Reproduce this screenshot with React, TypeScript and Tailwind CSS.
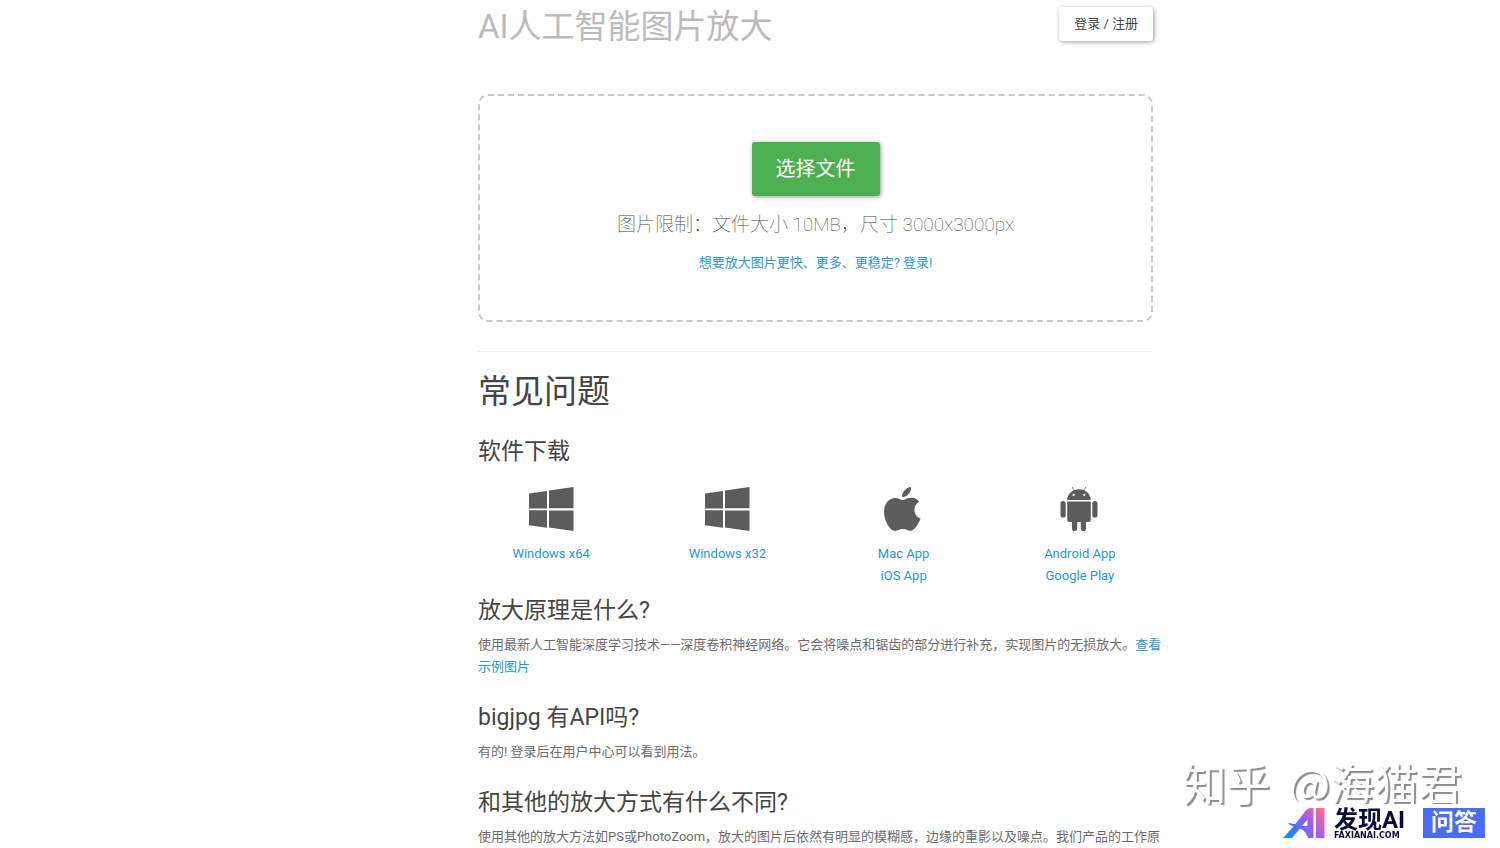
import type { ReactNode } from 'react';

interface DownloadLink {
  label: string;
  href: string;
}

interface PlatformProps {
  icon: ReactNode;
  links: DownloadLink[];
}

function WindowsIcon() {
  return (
    <svg viewBox="0 0 46 44" className="h-11 w-[46px] fill-[#5c5c5c]" aria-hidden="true">
      <path d="M1 6.400 19 4v17.400H1zM21 3.600 45.500 0v21.200H21zM1 23.200h18v17.500L1 38.200zM21 23.400h24.500V44L21 40.400z" />
    </svg>
  );
}

function AppleIcon() {
  return (
    <svg viewBox="0 0 39 44" className="h-11 w-[39px] fill-[#5c5c5c]" aria-hidden="true">
      <path d="M27 0c.6 5-4 10.200-9 10C17.500 5.500 22.200.4 27 0z" />
      <path d="M35.200 14.800c-3 1.900-4.800 4.500-4.800 8 0 4 2.400 7.300 6.100 8.800-1.300 4-5.400 11.700-9.700 12.200-3.100.1-4.500-1.700-8-1.700-3.400 0-4.700 1.700-7.700 1.900C6 44.100 0 33.600 0 25c0-8.400 5-14 11-14.100 3.200 0 6 2.100 7.800 2.100 1.900 0 5.300-2.600 9.200-2.200 2.800.1 5.500 1.400 7.200 4z" />
    </svg>
  );
}

function AndroidIcon() {
  return (
    <svg viewBox="0 0 40 44" className="h-11 w-10 fill-[#5c5c5c]" aria-hidden="true">
      <path
        fillRule="evenodd"
        d="M7.200 13C7.400 8.500 10 5.100 13.700 3.300L11.600 0l.6-.3 2.200 3.300c3-1.100 6.300-1.100 9.200 0L25.800-.3l.6.3-2.100 3.300C28 5.100 30.600 8.500 30.800 13zM13.700 6.800a1.100 1.100 0 1 0 0 2.200 1.100 1.100 0 0 0 0-2.200zm10.600 0a1.100 1.100 0 1 0 0 2.200 1.100 1.100 0 0 0 0-2.200z"
      />
      <path d="M7.200 14.400h23.600v18.200a2.500 2.500 0 0 1-2.500 2.500H9.700a2.500 2.500 0 0 1-2.500-2.500z" />
      <rect x="0.500" y="14" width="5.200" height="16.500" rx="2.600" />
      <rect x="32.300" y="14" width="5.200" height="16.500" rx="2.600" />
      <rect x="12" y="30" width="5.200" height="14" rx="2.600" />
      <rect x="20.800" y="30" width="5.200" height="14" rx="2.600" />
    </svg>
  );
}

function Platform({ icon, links }: PlatformProps) {
  return (
    <div className="flex flex-col items-center">
      {icon}
      <div className="mt-3 flex flex-col items-center">
        {links.map((link) => (
          <a key={link.label} href={link.href} className="text-[#2d95d6] hover:underline">
            {link.label}
          </a>
        ))}
      </div>
    </div>
  );
}

function Question({ title, children }: { title: string; children: ReactNode }) {
  return (
    <section className="mb-[27px]">
      <h2 className="text-[23px] leading-[26px] text-[#444]">{title}</h2>
      <p className="mt-[10px] lg:whitespace-nowrap">{children}</p>
    </section>
  );
}

function SiteBadge() {
  return (
    <div className="flex h-[44px] items-start justify-end bg-white pt-1 pr-[15px]">
      <svg viewBox="0 0 42 30" className="h-[30px] w-[42px]" aria-hidden="true">
        <defs>
          <linearGradient id="mark" gradientUnits="userSpaceOnUse" x1="2" y1="30" x2="40" y2="2">
            <stop offset="0" stopColor="#0a94ff" />
            <stop offset="0.3" stopColor="#3f78fb" />
            <stop offset="0.6" stopColor="#a35bf0" />
            <stop offset="1" stopColor="#ff6c8c" />
          </linearGradient>
        </defs>
        <g fill="url(#mark)">
          <path
            fillRule="evenodd"
            d="M0 30 10.500 18.500C8 17.800 6 16.500 5 14.500c2.500 1.200 5 1.600 7.500 1.400L22.500 3C24 1 25.500 0 28 0h2.500v30H25c-1-4.500-3.500-7.500-8-9.500L9 30zM24.500 11.500 19 18c2.500.2 4 .1 5.500-.3z"
          />
          <path d="M33 0h8.500v30H33z" />
        </g>
      </svg>
      <div className="ml-[9px] flex w-[75px] flex-col text-[#0b0b3b]">
        <span className="text-[24px] leading-[24px] font-bold whitespace-nowrap">发现AI</span>
        <span className="font-['DejaVu_Sans',sans-serif] text-[8px] leading-[8px] font-bold whitespace-nowrap">
          FAXIANAI.COM
        </span>
      </div>
      <span className="ml-[14px] flex h-[30px] w-[62px] items-center justify-center bg-[#4a6cf7] text-[23px] font-bold text-white">
        问答
      </span>
    </div>
  );
}

const platforms: PlatformProps[] = [
  { icon: <WindowsIcon />, links: [{ label: 'Windows x64', href: '#win64' }] },
  { icon: <WindowsIcon />, links: [{ label: 'Windows x32', href: '#win32' }] },
  {
    icon: <AppleIcon />,
    links: [
      { label: 'Mac App', href: '#mac' },
      { label: 'iOS App', href: '#ios' },
    ],
  },
  {
    icon: <AndroidIcon />,
    links: [
      { label: 'Android App', href: '#android' },
      { label: 'Google Play', href: '#play' },
    ],
  },
];

export default function App() {
  return (
    <div className="relative grid grid-cols-[478fr_675fr_347fr] overflow-hidden bg-white font-['Roboto','Noto_Sans_CJK_SC',sans-serif] text-[13px] leading-[22px] text-[#6b6b6b]">
      <main className="col-start-2 min-w-0">
        <header className="flex items-start justify-between pt-[7px]">
          <h1 className="text-[33px] leading-[40px] text-[#bbb]">AI人工智能图片放大</h1>
          <button
            type="button"
            className="h-[34px] rounded-[3px] bg-white px-[15px] text-[#444] shadow-[1px_1px_4px_rgba(0,0,0,0.4)]"
          >
            登录 / 注册
          </button>
        </header>

        <div className="mt-[47px] flex flex-col items-center rounded-[10px] border-2 border-dashed border-[#c8c8c8] pt-[46px] pb-[46px]">
          <button
            type="button"
            className="h-[54px] rounded-[3px] bg-[#4caf50] px-6 text-[20px] text-white shadow-[1px_1px_4px_rgba(0,0,0,0.4)]"
          >
            选择文件
          </button>
          <p className="mt-[15px] text-[19px] leading-[28px] font-thin text-[#444]">
            图片限制：文件大小 10MB，尺寸 3000x3000px
          </p>
          <a href="#login" className="mt-[13px] text-[#2d95d6] hover:underline">
            想要放大图片更快、更多、更稳定? 登录!
          </a>
        </div>

        <hr className="mt-[29px] border-[#eee]" />

        <h1 className="mt-[22px] text-[33px] leading-[36px] text-[#444]">常见问题</h1>

        <h2 className="mt-[29px] text-[23px] leading-[26px] text-[#444]">软件下载</h2>
        <div className="-mx-[15px] mt-[22px] mb-[11px] grid grid-cols-4">
          {platforms.map((platform) => (
            <Platform key={platform.links[0].label} {...platform} />
          ))}
        </div>

        <Question title="放大原理是什么?">
          使用最新人工智能深度学习技术——深度卷积神经网络。它会将噪点和锯齿的部分进行补充，实现图片的无损放大。
          <a href="#samples" className="text-[#2d95d6] hover:underline">
            查看
            <br />
            示例图片
          </a>
        </Question>
        <Question title="bigjpg 有API吗?">有的! 登录后在用户中心可以看到用法。</Question>
        <Question title="和其他的放大方式有什么不同?">
          使用其他的放大方法如PS或PhotoZoom，放大的图片后依然有明显的模糊感，边缘的重影以及噪点。我们产品的工作原
        </Question>
      </main>

      <div className="fixed right-0 bottom-0 flex flex-col items-end">
        <p className="flex gap-[18px] pr-[38px] font-['Noto_Sans_CJK_SC',sans-serif] text-[44px] leading-[44px] whitespace-nowrap text-white [text-shadow:2px_2px_1px_#8c8c8c]">
          <span>知乎</span>
          <span>@海猫君</span>
        </p>
        <SiteBadge />
      </div>
    </div>
  );
}
